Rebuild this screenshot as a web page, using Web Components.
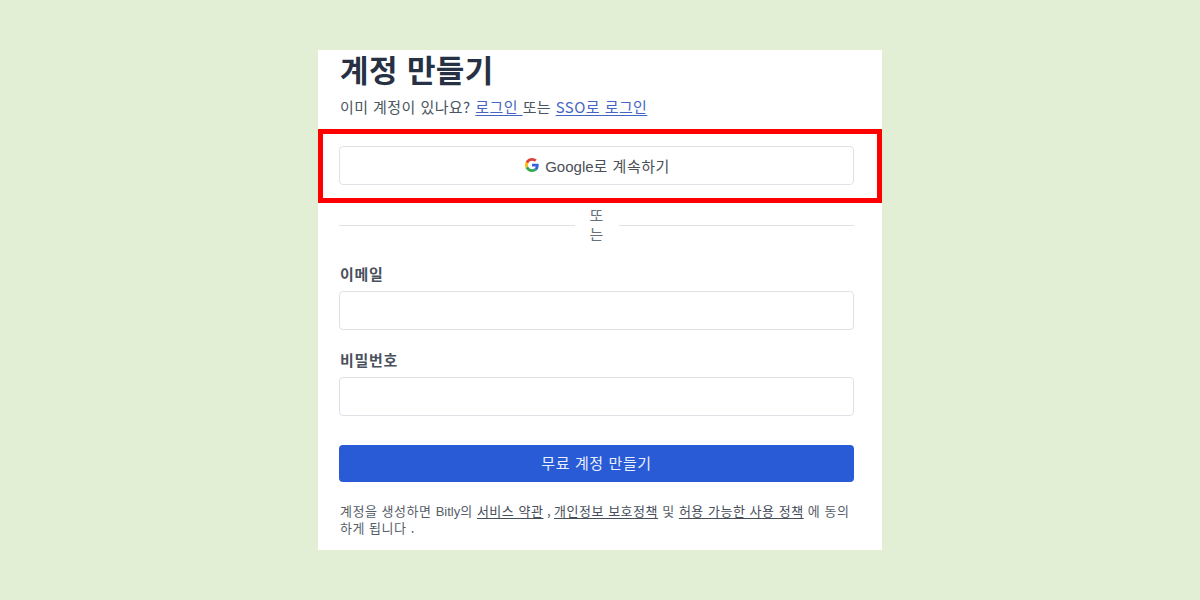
<!DOCTYPE html>
<html lang="ko">
<head>
<meta charset="utf-8">
<title>계정 만들기</title>
<style>
  body {
    margin: 0;
    height: 600px;
    background: #e3efd5;
    font-family: "Noto Sans CJK KR", sans-serif;
    color: #4a5562;
    display: flex;
    justify-content: center;
    align-items: center;
    overflow: hidden;
  }

  .latin {
    font-family: "Liberation Sans", sans-serif;
    letter-spacing: 0;
  }
</style>
</head>
<body>
  <signup-card>
    <page-title slot="header">계정 만들기</page-title>
    <login-hint slot="header"></login-hint>
    <focus-frame slot="social">
      <google-button><span class="latin">Google</span>로 계속하기</google-button>
    </focus-frame>
    <or-divider><span>또</span><span>는</span></or-divider>
    <form-field label="이메일"></form-field>
    <form-field label="비밀번호" type="password"></form-field>
    <submit-button>무료 계정 만들기</submit-button>
    <legal-note></legal-note>
  </signup-card>

<script>
class SignupCard extends HTMLElement {
  connectedCallback() {
    this.attachShadow({ mode: 'open' });
    this.shadowRoot.innerHTML = `
      <style>
        :host {
          display: flex;
          flex-direction: column;
          box-sizing: border-box;
          width: 564px;
          height: 500px;
          background: #fff;
        }

        .header {
          height: 79px;
          padding: 0 21px;
          box-sizing: border-box;
        }

        .body {
          padding: 0 28px 0 21px;
        }
      </style>

      <div class="header"><slot name="header"></slot></div>
      <slot name="social"></slot>
      <div class="body"><slot></slot></div>
    `;
  }
}

class PageTitle extends HTMLElement {
  connectedCallback() {
    this.attachShadow({ mode: 'open' });
    this.shadowRoot.innerHTML = `
      <style>
        :host {
          display: block;
        }

        h1 {
          margin: 0;
          padding-left: 1px;
          font-size: 31px;
          font-weight: 700;
          line-height: 38px;
          letter-spacing: 0.4px;
          color: #273144;
          white-space: nowrap;
        }
      </style>

      <h1><slot></slot></h1>
    `;
  }
}

class LoginHint extends HTMLElement {
  connectedCallback() {
    this.attachShadow({ mode: 'open' });
    this.shadowRoot.innerHTML = `
      <style>
        :host {
          display: block;
          height: 22px;
          margin-top: 8px;
          padding-left: 1px;
          font-size: 15px;
          line-height: 22px;
          letter-spacing: 0.43px;
          white-space: nowrap;
        }

        a {
          color: #4565c4;
          text-decoration: underline;
          text-underline-offset: 2px;
        }
      </style>

      이미 계정이 있나요? <a href="#">로그인&nbsp;</a>또는 <a href="#">SSO로 로그인</a>
    `;
  }
}

class FocusFrame extends HTMLElement {
  connectedCallback() {
    this.attachShadow({ mode: 'open' });
    this.shadowRoot.innerHTML = `
      <style>
        :host {
          display: block;
          box-sizing: border-box;
          height: 74px;
          padding: 12px 23px 0 16px;
          border: 5px solid #fe0000;
        }
      </style>

      <slot></slot>
    `;
  }
}

class GoogleButton extends HTMLElement {
  connectedCallback() {
    this.attachShadow({ mode: 'open' });
    this.shadowRoot.innerHTML = `
      <style>
        :host {
          display: block;
          font-size: 15px;
          letter-spacing: 0.5px;
          color: #4a5058;
        }

        button {
          display: flex;
          align-items: center;
          justify-content: center;
          gap: 6px;
          box-sizing: border-box;
          width: 100%;
          height: 39px;
          padding: 0 0 1px 2px;
          border: 1px solid #dfe3e8;
          border-radius: 4px;
          background: #fff;
          color: inherit;
          font: inherit;
          letter-spacing: inherit;
        }

        svg {
          width: 14px;
          height: 14px;
        }
      </style>

      <button type="button">
        <svg viewBox="0 0 48 48" aria-hidden="true">
          <path fill="#E04338" d="M24 9.5c3.54 0 6.71 1.22 9.21 3.6l6.85-6.85C35.9 2.38 30.47 0 24 0 14.62 0 6.51 5.38 2.56 13.22l7.98 6.19C12.43 13.72 17.74 9.5 24 9.5z"/>
          <path fill="#3563DC" d="M46.98 24.55c0-1.57-.15-3.09-.38-4.55H24v9.02h12.94c-.58 2.96-2.26 5.48-4.78 7.18l7.73 6c4.51-4.18 7.09-10.36 7.09-17.65z"/>
          <path fill="#FBBC05" d="M10.53 28.59c-.48-1.45-.76-2.99-.76-4.59s.27-3.14.76-4.59l-7.98-6.19C.92 16.46 0 20.12 0 24c0 3.88.92 7.54 2.56 10.78l7.97-6.19z"/>
          <path fill="#34A853" d="M24 48c6.48 0 11.93-2.13 15.89-5.81l-7.73-6c-2.15 1.45-4.92 2.3-8.16 2.3-6.26 0-11.57-4.22-13.47-9.91l-7.98 6.19C6.51 42.62 14.62 48 24 48z"/>
        </svg>
        <span><slot></slot></span>
      </button>
    `;
  }
}

class OrDivider extends HTMLElement {
  connectedCallback() {
    this.attachShadow({ mode: 'open' });
    this.shadowRoot.innerHTML = `
      <style>
        :host {
          display: flex;
          align-items: center;
          gap: 15px;
          height: 45px;
        }

        .line {
          flex: 1;
          height: 1px;
          background: #dfe2e5;
        }

        .word {
          display: flex;
          flex-direction: column;
          width: 14px;
          padding-bottom: 3px;
          font-size: 15px;
          line-height: 19px;
          color: #68717b;
        }
      </style>

      <div class="line"></div>
      <div class="word"><slot></slot></div>
      <div class="line"></div>
    `;
  }
}

class FormField extends HTMLElement {
  connectedCallback() {
    const label = this.getAttribute('label');
    const type = this.getAttribute('type') || 'text';
    this.attachShadow({ mode: 'open' });
    this.shadowRoot.innerHTML = `
      <style>
        :host {
          display: block;
          height: 69px;
          margin-top: 13px;
          margin-bottom: 17px;
        }

        label {
          display: block;
          height: 30px;
          padding-left: 1px;
          font-size: 15px;
          font-weight: 700;
          line-height: 26px;
          letter-spacing: 0.7px;
          color: #49515d;
        }

        input {
          display: block;
          box-sizing: border-box;
          width: 100%;
          height: 39px;
          padding: 0 12px;
          border: 1px solid #dfe1e6;
          border-radius: 4px;
          background: #fff;
          outline: none;
        }
      </style>

      <label for="field">${label}</label>
      <input id="field" type="${type}">
    `;
  }
}

class SubmitButton extends HTMLElement {
  connectedCallback() {
    this.attachShadow({ mode: 'open' });
    this.shadowRoot.innerHTML = `
      <style>
        :host {
          display: block;
          margin-top: 29px;
        }

        button {
          display: block;
          width: 100%;
          height: 37px;
          padding: 0 0 2px;
          border: 0;
          border-radius: 4px;
          background: #285bd5;
          color: #e9effc;
          font: 15px "Noto Sans CJK KR", sans-serif;
          letter-spacing: 0.6px;
        }
      </style>

      <button type="submit"><slot></slot></button>
    `;
  }
}

class LegalNote extends HTMLElement {
  connectedCallback() {
    this.attachShadow({ mode: 'open' });
    this.shadowRoot.innerHTML = `
      <style>
        :host {
          display: block;
          margin-top: 21px;
          padding-left: 1px;
          font-size: 13px;
          line-height: 16px;
          letter-spacing: 0.52px;
          color: #565e69;
        }

        div {
          white-space: nowrap;
        }

        a {
          color: #464e5a;
          text-decoration: underline;
          text-underline-offset: 2px;
        }

        .latin {
          font-family: "Liberation Sans", sans-serif;
          letter-spacing: 0;
        }

        .comma {
          letter-spacing: -0.1px;
        }
      </style>

      <div>계정을 생성하면 <span class="latin">Bitly</span>의 <a href="#">서비스 약관</a><span class="comma"> , </span><a href="#">개인정보 보호정책</a> 및 <a href="#">허용 가능한 사용 정책</a> 에 동의</div>
      <div>하게 됩니다 .</div>
    `;
  }
}

customElements.define('signup-card', SignupCard);
customElements.define('page-title', PageTitle);
customElements.define('login-hint', LoginHint);
customElements.define('focus-frame', FocusFrame);
customElements.define('google-button', GoogleButton);
customElements.define('or-divider', OrDivider);
customElements.define('form-field', FormField);
customElements.define('submit-button', SubmitButton);
customElements.define('legal-note', LegalNote);
</script>
</body>
</html>
